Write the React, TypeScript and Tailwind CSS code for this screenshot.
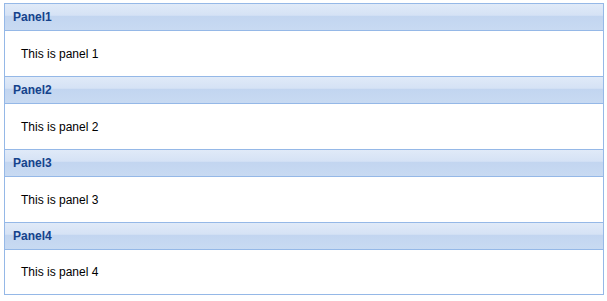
import React from "react";

const panels = [1, 2, 3, 4];

export default function App() {
  return (
    <div className="w-[607px] h-[301px] bg-white pt-[3px] pl-[4px]" style={{ fontFamily: '"Liberation Sans", Arial, sans-serif' }}>
      <div className="w-[600px] border border-[#95b8e7] flex flex-col">
        {panels.map((n, i) => (
          <div key={n} className="flex flex-col">
            <div className="h-[27px] border-b border-[#95b8e7] bg-[linear-gradient(to_bottom,#e0eaf8_0%,#d5e2f5_44%,#c2d5f0_45%,#c8daf2_100%)] flex items-center pl-[8px]">
              <span className="text-[12px] font-bold text-[#15428b] leading-none">Panel{n}</span>
            </div>
            <div className={`bg-white flex items-center pl-[16px] ${i < panels.length - 1 ? "h-[46px] border-b border-[#95b8e7]" : "h-[44px]"}`}>
              <span className="text-[12px] text-black leading-none">This is panel {n}</span>
            </div>
          </div>
        ))}
      </div>
    </div>
  );
}
